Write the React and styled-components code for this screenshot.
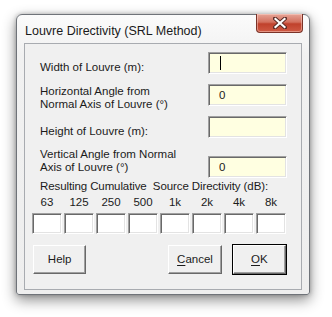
import React from "react";
import styled, { createGlobalStyle } from "styled-components";

const Global = createGlobalStyle`
  html, body {
    margin: 0;
    padding: 0;
    background: #ffffff;
  }
  body {
    width: 332px;
    height: 317px;
    overflow: hidden;
  }
`;

const Page = styled.div`
  padding: 14px 0 0 16px;
`;

const Window = styled.div`
  width: 294px;
  height: 281px;
  box-sizing: border-box;
  border: 1px solid #6f7379;
  border-radius: 6px 6px 3px 3px;
  background: linear-gradient(#fbfbfb, #f1f1f1 40px, #eeeeee);
  box-shadow: 0 5px 14px rgba(0, 0, 0, 0.45), 0 0 4px rgba(0, 0, 0, 0.25);
  display: flex;
  flex-direction: column;
`;

const TitleBar = styled.div`
  height: 28px;
  display: flex;
  align-items: flex-start;
  justify-content: space-between;
  padding: 0 6px 0 8px;
`;

const Title = styled.div`
  font-family: "Liberation Sans", Arial, sans-serif;
  font-size: 12.5px;
  color: #1a1a1a;
  margin-top: 9px;
`;

const CloseButton = styled.div`
  width: 47px;
  height: 19px;
  margin-top: -1px;
  box-sizing: border-box;
  border: 1px solid #7a3328;
  border-top: none;
  border-radius: 0 0 4px 4px;
  background: linear-gradient(#e7a597, #d3705e 45%, #c0412c 55%, #cf5a44);
  box-shadow: inset 0 0 0 1px rgba(255, 220, 210, 0.45);
  display: flex;
  align-items: center;
  justify-content: center;
`;

const Client = styled.div`
  margin: 0 7px 4px 7px;
  flex: 1;
  box-sizing: border-box;
  border: 1px solid #a8abb0;
  background: #f0f0f0;
  padding: 0 14px 0 15px;
  font-family: "Liberation Sans", Arial, sans-serif;
  font-size: 11.5px;
  color: #1b1b1b;
  display: flex;
  flex-direction: column;
`;

const Row = styled.div`
  display: flex;
  justify-content: space-between;
  align-items: flex-start;
  height: ${(p) => p.$height || 22}px;
  margin-top: ${(p) => p.$top}px;
`;

const Label = styled.div`
  line-height: 13px;
  padding-top: ${(p) => p.$pad}px;
`;

const Field = styled.div`
  width: 79px;
  height: 22px;
  box-sizing: border-box;
  margin-top: ${(p) => p.$top || 0}px;
  background: #ffffe1;
  border-top: 1px solid #a0a0a0;
  border-left: 1px solid #a0a0a0;
  border-right: 1px solid #ffffff;
  border-bottom: 1px solid #ffffff;
  box-shadow: inset 1px 1px 0 #696969, inset -1px -1px 0 #e3e3e3;
  padding: 0 0 0 10px;
  display: flex;
  align-items: center;
  line-height: 13px;
`;

const Caret = styled.span`
  display: block;
  width: 1px;
  height: 14px;
  background: #000;
  margin-left: 1px;
`;

const Heading = styled.div`
  line-height: 13px;
  margin-top: 2px;
  letter-spacing: -0.1px;
`;

const Bands = styled.div`
  display: grid;
  grid-template-columns: repeat(8, 30px);
  column-gap: 2px;
  margin-top: 3px;
  margin-left: -8px;
`;

const Band = styled.div`
  text-align: center;
  line-height: 13px;
`;

const Box = styled.div`
  height: 21px;
  margin-top: 4px;
  box-sizing: border-box;
  background: #ffffff;
  border-top: 1px solid #a0a0a0;
  border-left: 1px solid #a0a0a0;
  border-right: 1px solid #ffffff;
  border-bottom: 1px solid #ffffff;
  box-shadow: inset 1px 1px 0 #696969, inset -1px -1px 0 #e3e3e3;
`;

const Buttons = styled.div`
  display: flex;
  align-items: flex-start;
  margin-top: 10px;
  margin-left: -8px;
  gap: 9px;
`;

const Button = styled.div`
  width: 56px;
  height: 31px;
  box-sizing: border-box;
  background: #f0f0f0;
  border: 1px solid ${(p) => (p.$default ? "#000000" : "transparent")};
  display: flex;
  margin-left: ${(p) => p.$push || 0}px;
`;

const ButtonFace = styled.div`
  flex: 1;
  box-sizing: border-box;
  border-top: 1px solid #ffffff;
  border-left: 1px solid #ffffff;
  border-right: 1px solid #696969;
  border-bottom: 1px solid #696969;
  box-shadow: inset -1px -1px 0 #a0a0a0;
  display: flex;
  align-items: center;
  justify-content: center;
  line-height: 13px;
  padding-bottom: 1px;
`;

const Key = styled.span`
  text-decoration: underline;
  text-underline-offset: 2px;
`;

const bands = ["63", "125", "250", "500", "1k", "2k", "4k", "8k"];

export default function App() {
  return (
    <>
      <Global />
      <Page>
        <Window>
          <TitleBar>
            <Title>Louvre Directivity (SRL Method)</Title>
            <CloseButton>
              <svg width="14" height="12" viewBox="0 0 14 12">
                <path
                  d="M2 1.5 L12 10.5 M12 1.5 L2 10.5"
                  stroke="#5a2a24"
                  strokeWidth="4"
                  strokeLinecap="square"
                />
                <path
                  d="M2.5 2 L11.5 10 M11.5 2 L2.5 10"
                  stroke="#ffffff"
                  strokeWidth="2.2"
                  strokeLinecap="square"
                />
              </svg>
            </CloseButton>
          </TitleBar>
          <Client>
            <Row $top={8}>
              <Label $pad={9}>Width of Louvre (m):</Label>
              <Field>
                <Caret />
              </Field>
            </Row>
            <Row $top={10}>
              <Label $pad={1}>
                Horizontal Angle from
                <br />
                Normal Axis of Louvre (°)
              </Label>
              <Field>0</Field>
            </Row>
            <Row $top={10}>
              <Label $pad={9}>Height of Louvre (m):</Label>
              <Field />
            </Row>
            <Row $top={10} $height={30}>
              <Label $pad={0}>
                Vertical Angle from Normal
                <br />
                Axis of Louvre (°)
              </Label>
              <Field $top={8}>0</Field>
            </Row>
            <Heading>Resulting Cumulative&nbsp; Source Directivity (dB):</Heading>
            <Bands>
              {bands.map((b) => (
                <Band key={b}>{b}</Band>
              ))}
              {bands.map((b) => (
                <Box key={"box" + b} />
              ))}
            </Bands>
            <Buttons>
              <Button>
                <ButtonFace>Help</ButtonFace>
              </Button>
              <Button $push={71}>
                <ButtonFace>
                  <span>
                    <Key>C</Key>ancel
                  </span>
                </ButtonFace>
              </Button>
              <Button $default>
                <ButtonFace>
                  <span>
                    <Key>O</Key>K
                  </span>
                </ButtonFace>
              </Button>
            </Buttons>
          </Client>
        </Window>
      </Page>
    </>
  );
}
